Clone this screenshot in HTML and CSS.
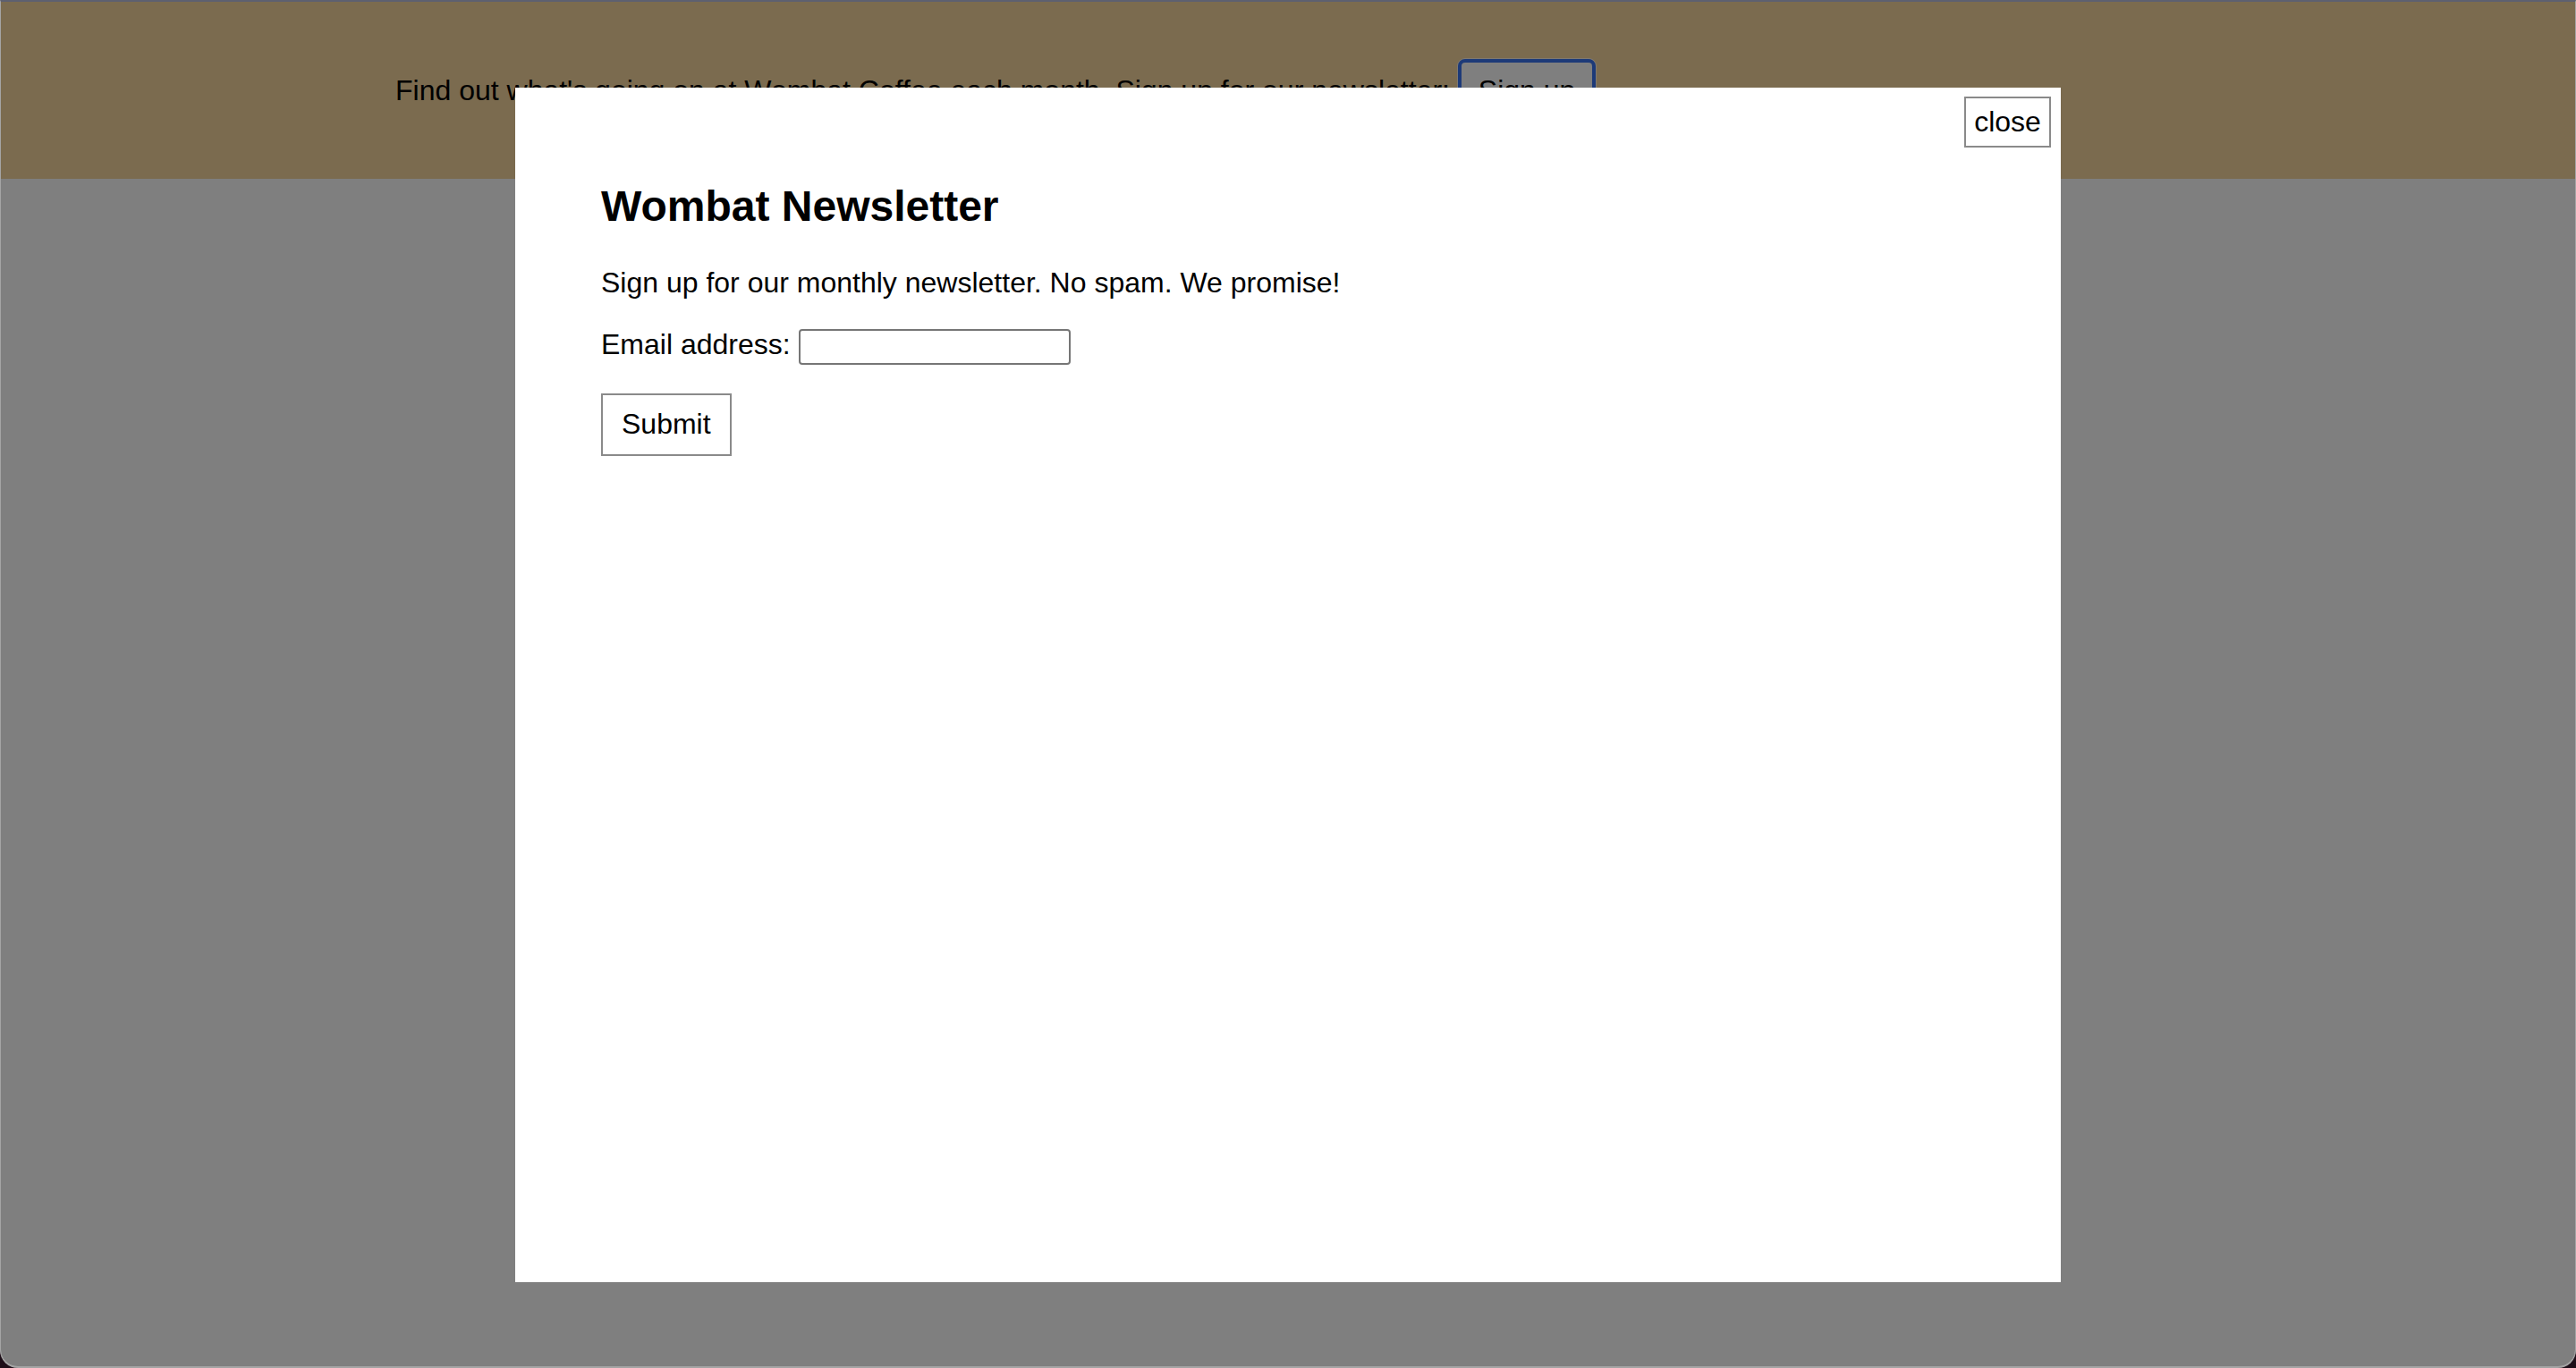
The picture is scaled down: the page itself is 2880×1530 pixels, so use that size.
FILE: index.html
```html
<!DOCTYPE html>
<html lang="en">
<head>
<meta charset="utf-8">
<title>Wombat Coffee</title>
<link rel="stylesheet" href="styles.css">
</head>
<body>
<div class="window">
  <header class="banner">
    Find out what's going on at Wombat Coffee each month. Sign up for our newsletter: <button class="btn btn-focus" type="button">Sign up</button>
  </header>
  <div class="backdrop"></div>
  <div class="modal" role="dialog" aria-labelledby="modal-title">
    <button class="btn-close" type="button">close</button>
    <h2 id="modal-title" class="modal-title">Wombat Newsletter</h2>
    <p class="modal-text">Sign up for our monthly newsletter. No spam. We promise!</p>
    <form class="modal-form">
      <p class="form-row"><label for="email">Email address:</label> <input class="field" type="email" id="email"></p>
      <p class="form-row"><button class="btn" type="submit">Submit</button></p>
    </form>
  </div>
</div>
</body>
</html>
```

FILE: styles.css
```css
html {
  background: #1d0e18;
}

body {
  margin: 0;
  font-family: "Liberation Sans", Arial, Helvetica, sans-serif;
  font-size: 32px;
  color: #000;
}

.window {
  position: relative;
  box-sizing: border-box;
  height: 1530px;
  background: #ffffff;
  border-top: 2px solid #5d6070;
  border-left: 1px solid #a4a4a4;
  border-right: 1px solid #a4a4a4;
  border-bottom: 2px solid #a4a4a4;
  border-radius: 0 0 20px 20px;
  overflow: hidden;
}

.banner {
  background: #f6d69e;
  padding: 64px 0 64px 441px;
  line-height: normal;
  white-space: nowrap;
}

.btn {
  box-sizing: border-box;
  height: 70px;
  padding: 0 21px;
  font-family: inherit;
  font-size: 32px;
  color: #000;
  background: #ffffff;
  border: 2px solid #8a8a8a;
  border-radius: 0;
  vertical-align: baseline;
  white-space: nowrap;
}

.btn-focus {
  padding: 0 19px;
  background: #ffffff;
  border: 4px solid #3a74f0;
  border-radius: 8px;
  box-shadow: 0 0 0 1px rgba(255, 255, 255, 0.7);
}

.backdrop {
  position: absolute;
  inset: 0;
  background: rgba(0, 0, 0, 0.5);
}

.modal {
  position: absolute;
  top: 96px;
  left: 575px;
  box-sizing: border-box;
  width: 1728px;
  height: 1336px;
  padding: 105px 96px 0;
  background: #ffffff;
}

.btn-close {
  position: absolute;
  top: 10px;
  right: 11px;
  box-sizing: border-box;
  width: 97px;
  height: 57px;
  padding: 0;
  font-family: inherit;
  font-size: 32px;
  color: #000;
  background: #ffffff;
  border: 2px solid #8a8a8a;
  border-radius: 0;
}

.modal-title {
  margin: 0 0 40px;
  font-size: 48px;
  font-weight: bold;
}

.modal-text {
  margin: 0 0 32px;
}

.modal-form {
  margin: 0;
}

.form-row {
  margin: 0 0 32px;
}

.field {
  box-sizing: border-box;
  width: 304px;
  height: 40px;
  padding: 2px 4px;
  font-family: inherit;
  font-size: 26.67px;
  border: 2px solid #767676;
  border-radius: 4px;
  background: #fff;
  vertical-align: baseline;
}
```
